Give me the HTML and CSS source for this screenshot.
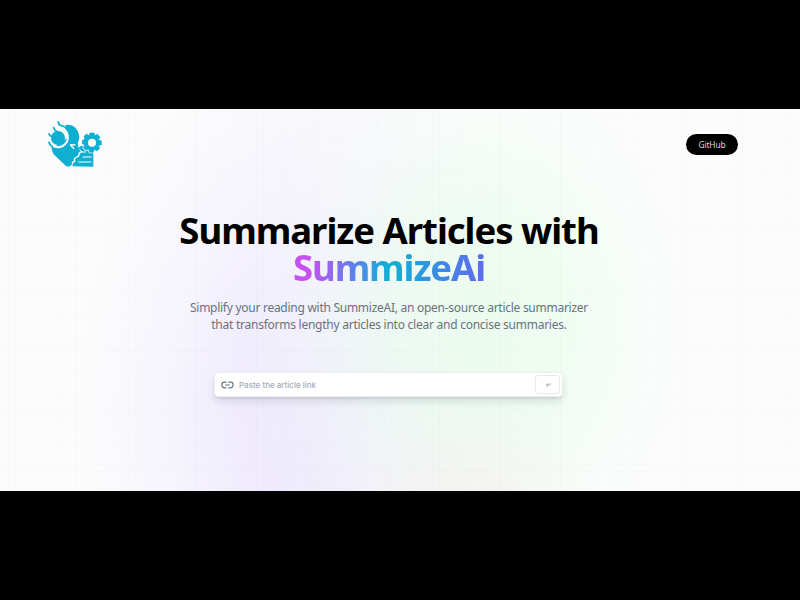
FILE: index.html
```html
<!DOCTYPE html>
<html lang="en">
<head>
<meta charset="utf-8">
<title>SummizeAi</title>
<link rel="stylesheet" href="styles.css">
</head>
<body>
<main class="page">
  <nav class="nav">
    <svg class="logo" viewBox="0 0 162 138" aria-label="SummizeAi logo">
      <g fill="#0fafd1">
        <path d="M53 12 C78 8 94 28 94 51 L89 68 L92 81 L98 91 L91 96 L91 103 L83 108 L77 112 L78 119 L72 122 L71 132 Q62 140 53 134 L20 103 Q12 96 12 80 L30 72 L58 50 Z"/>
        <path d="M73 136 L75 126 L82 122 L82 112 L92 108 L96 101 L94 99 L104 92 L92 82 C94 75 101 72 107 76 L124 80 Q137 83 136 96 L136 137 Z"/>
      </g>
      <path d="M48 24 C64 38 64 64 44 75 Q28 83 12 73" fill="none" stroke="#fcfcfd" stroke-width="6"/>
      <circle cx="30" cy="51" r="21" fill="#0fafd1"/>
      <path d="M31 3 Q32 13 40 14 Q51 15 56 24 M17 20 Q19 29 28 32 L34 40 M3 39 Q6 47 14 46 L24 54 M3 64 Q5 73 12 76 L16 90" fill="none" stroke="#0fafd1" stroke-width="5.5" stroke-linecap="round"/>
      <path d="M66 71 L82 72 M67 72 L78 83" fill="none" stroke="#fff" stroke-width="4"/>
      <g stroke-linejoin="round">
        <path d="M126 36 H138 L140 44 L148 40 L156 49 L151 56 L160 60 V71 L151 74 L155 82 L147 90 L139 85 L136 94 H125 L122 85 L114 88 L106 80 L110 72 L103 68 V58 L111 55 L108 46 L116 39 L123 44 Z" fill="#0fafd1" stroke="#fcfcfd" stroke-width="6"/>
        <path d="M126 36 H138 L140 44 L148 40 L156 49 L151 56 L160 60 V71 L151 74 L155 82 L147 90 L139 85 L136 94 H125 L122 85 L114 88 L106 80 L110 72 L103 68 V58 L111 55 L108 46 L116 39 L123 44 Z" fill="#0fafd1" stroke="#0fafd1" stroke-width="2"/>
      </g>
      <circle cx="132" cy="65" r="12" fill="#fcfcfd"/>
      <path d="M102 93 H112 M105 108 H130 M92 123 H129" fill="none" stroke="#fff" stroke-width="3.5" stroke-linecap="round"/>
    </svg>
    <button class="github">GitHub</button>
  </nav>
  <header class="hero">
    <h1 class="title"><span class="title-line">Summarize Articles with</span><span class="brand">SummizeAi</span></h1>
    <p class="lead"><span class="lead-first">Simplify your reading with SummizeAI, an open-source article summarizer</span><span class="lead-second">that transforms lengthy articles into clear and concise summaries.</span></p>
  </header>
  <form class="search">
    <svg class="link-icon" viewBox="0 0 14 10" fill="none" stroke="#66747b" stroke-width="1.3"><path d="M6 1.9H4a3.1 3.1 0 0 0 0 6.2h2M8 1.9h2a3.1 3.1 0 0 1 0 6.2H8M4.5 5h5"/></svg>
    <span class="placeholder">Paste the article link</span>
    <button class="submit" type="button" aria-label="Submit"><svg viewBox="0 0 6 6" fill="none" stroke="#a2a8ad" stroke-width=".9"><path d="M5 1v2H1.5M3 1.5 1.3 3 3 4.6"/></svg></button>
  </form>
</main>
</body>
</html>
```
FILE: styles.css
```css
* { box-sizing: border-box; }
body {
  margin: 0;
  height: 600px;
  padding-top: 109px;
  background: #000;
  overflow: hidden;
  font-family: "Noto Sans", sans-serif;
}
.page {
  height: 382px;
  display: flex;
  flex-direction: column;
  align-items: center;
  padding: 11px 62px 0 40px;
  background:
    linear-gradient(90deg, rgba(40,40,70,.014) 1px, transparent 1px) 14px 0 / 60.7px 100%,
    linear-gradient(rgba(40,40,70,.014) 1px, transparent 1px) 0 -2px / 100% 60.7px,
    linear-gradient(90deg, rgba(40,40,70,.007) 1px, transparent 1px) 2px 0 / 6.07px 100%,
    linear-gradient(rgba(40,40,70,.007) 1px, transparent 1px) 0 4px / 100% 6.07px,
    radial-gradient(ellipse 130px 110px at 470px 395px, rgba(246,240,236,.65), rgba(246,240,236,0)),
    radial-gradient(ellipse 240px 310px at 480px 215px, rgba(235,252,238,.95) 0, rgba(236,253,239,.75) 35%, rgba(245,254,247,.35) 70%, rgba(252,252,252,0) 100%),
    radial-gradient(ellipse 245px 390px at 320px 310px, #ede8fc 0, #f1edfd 35%, #f8f6fd 68%, #fcfcfc 100%);
}
.nav {
  align-self: stretch;
  display: flex;
  justify-content: space-between;
  align-items: center;
  height: 47px;
  padding-left: 8px;
}
.logo { width: 54px; height: 46px; }
.github {
  width: 52px;
  height: 21px;
  margin-top: 2px;
  padding: 0 0 1px;
  border: 0;
  border-radius: 11px;
  background: #000;
  color: #d6d9dc;
  font: 8.4px "Noto Sans", sans-serif;
  letter-spacing: -.1px;
}
.hero {
  display: flex;
  flex-direction: column;
  align-items: center;
  margin-top: 45px;
}
.title {
  display: flex;
  flex-direction: column;
  align-items: center;
  margin: 0;
  font-size: 36.5px;
  line-height: 37px;
  font-weight: 700;
  color: #000;
  white-space: nowrap;
}
.title-line { letter-spacing: -1.02px; }
.brand {
  letter-spacing: -1.1px;
  padding-bottom: 2px;
  background: linear-gradient(90deg, #c850f0 8%, #5c80ed 32%, #0fb2d2 50%, #5c70ee 95%);
  -webkit-background-clip: text;
  background-clip: text;
  color: transparent;
}
.lead {
  display: flex;
  flex-direction: column;
  align-items: center;
  margin: 11px 0 0;
  font-size: 12px;
  line-height: 17px;
  color: #6a737d;
  white-space: nowrap;
}
.lead-first { letter-spacing: -.27px; }
.lead-second { letter-spacing: -.25px; }
.search {
  width: 349px;
  height: 25px;
  margin: 39px 1px 0 0;
  padding: 0 2px 0 6px;
  display: flex;
  align-items: center;
  background: #fff;
  border: 1px solid #eceef1;
  border-radius: 4px;
  box-shadow: 0 5px 8px -1px rgba(60,65,80,.16), 0 2px 3px -1px rgba(60,65,80,.12);
}
.link-icon { width: 13px; height: 10px; margin-right: 5px; }
.placeholder {
  flex: 1;
  font: 500 8px Inter, sans-serif;
  color: #a4abb4;
}
.submit {
  width: 25px;
  height: 19px;
  padding: 0;
  display: flex;
  align-items: center;
  justify-content: center;
  background: #fff;
  border: 1px solid #e6e8eb;
  border-radius: 3px;
}
.submit svg { width: 6px; height: 6px; }
```
